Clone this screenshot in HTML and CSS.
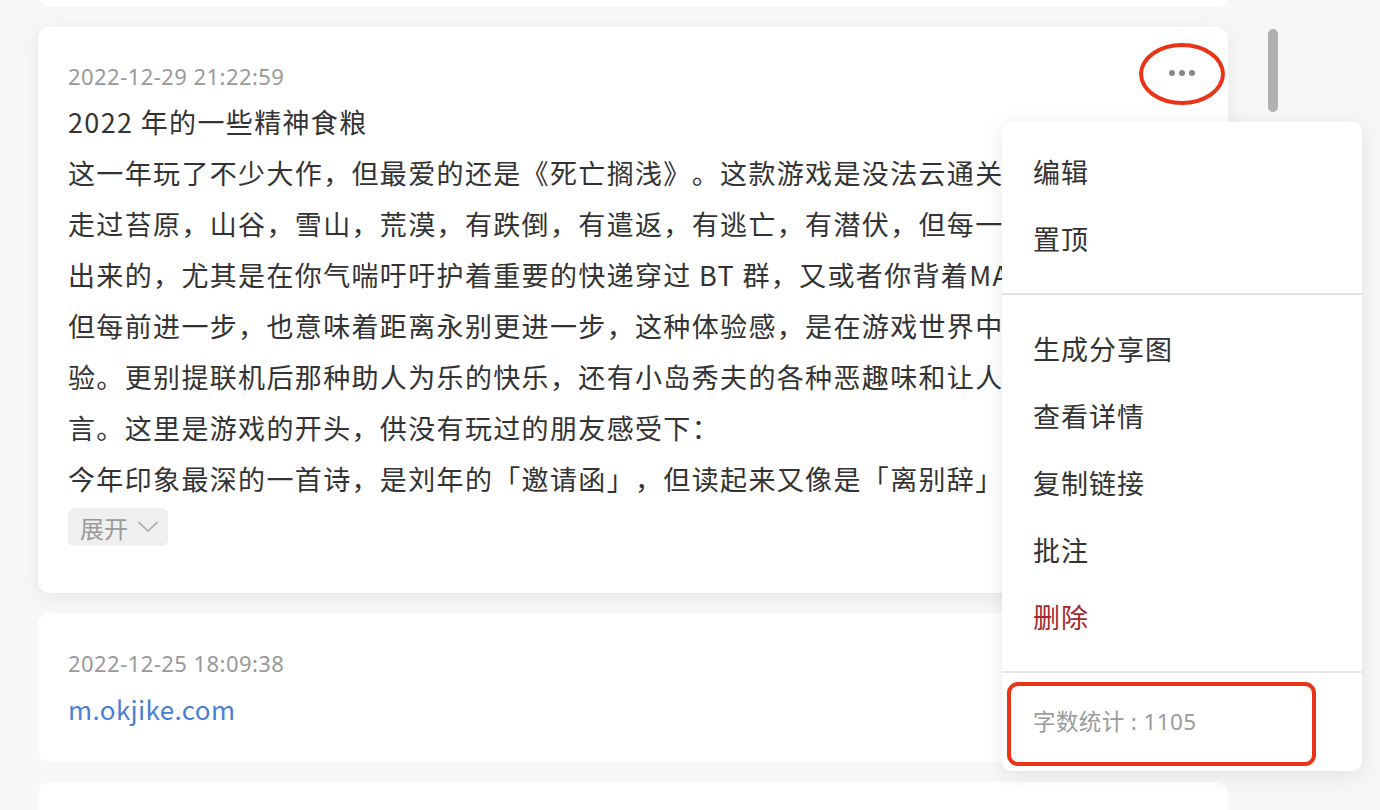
FILE: index.html
```html
<!DOCTYPE html>
<html lang="zh-CN">
<head>
<meta charset="utf-8">
<title>笔记</title>
<link rel="stylesheet" href="styles.css">
</head>
<body>
<div class="page">
  <div class="feed">
    <div class="card card-prev"></div>

    <div class="card card-active">
      <div class="card-head">
        <div class="time">2022-12-29 21:22:59</div>
        <button class="more" aria-label="更多"><span></span><span></span><span></span></button>
      </div>
      <div class="title">2022 年的一些精神食粮</div>
      <div class="body">
        <div class="line">这一年玩了不少大作，但最爱的还是《死亡搁浅》。这款游戏是没法云通关</div>
        <div class="line">走过苔原，山谷，雪山，荒漠，有跌倒，有遣返，有逃亡，有潜伏，但每一</div>
        <div class="line">出来的，尤其是在你气喘吁吁护着重要的快递穿过 BT 群，又或者你背着MAX</div>
        <div class="line">但每前进一步，也意味着距离永别更进一步，这种体验感，是在游戏世界中很</div>
        <div class="line">验。更别提联机后那种助人为乐的快乐，还有小岛秀夫的各种恶趣味和让人</div>
        <div class="line">言。这里是游戏的开头，供没有玩过的朋友感受下：</div>
        <div class="line">今年印象最深的一首诗，是刘年的「邀请函」，但读起来又像是「离别辞」</div>
      </div>
      <button class="expand">展开<svg width="22" height="12" viewBox="0 0 22 12"><path d="M2 1.5 L11 10 L20 1.5" fill="none" stroke="#a6a6a6" stroke-width="1.7" stroke-linecap="round" stroke-linejoin="round"/></svg></button>
    </div>

    <div class="card card-link">
      <div class="time">2022-12-25 18:09:38</div>
      <a class="link" href="#">m.okjike.com</a>
    </div>

    <div class="card card-next"></div>
  </div>

  <div class="scrollbar"></div>

  <div class="menu">
    <div class="menu-group first">
      <div class="menu-item">编辑</div>
      <div class="menu-item">置顶</div>
    </div>
    <div class="menu-group">
      <div class="menu-item">生成分享图</div>
      <div class="menu-item">查看详情</div>
      <div class="menu-item">复制链接</div>
      <div class="menu-item">批注</div>
      <div class="menu-item danger">删除</div>
    </div>
    <div class="menu-foot">字数统计 : 1105</div>
  </div>

  <div class="mark mark-ellipse"></div>
  <div class="mark mark-rect"></div>
</div>
</body>
</html>
```

FILE: styles.css
```css
* { box-sizing: border-box; }
html, body {
  margin: 0;
  padding: 0;
  background: #f7f7f7;
  height: 810px;
  overflow: hidden;
}
body {
  font-family: "Noto Sans CJK SC", "Noto Sans", sans-serif;
  color: #333333;
  text-spacing-trim: space-all;
}
.page {
  position: relative;
  width: 1380px;
  height: 810px;
  overflow: hidden;
}
.feed {
  display: flex;
  flex-direction: column;
  gap: 20px;
  width: 1190px;
  margin-left: 38px;
  margin-top: -133px;
}
.card {
  background: #ffffff;
  border-radius: 12px;
}
.card-prev { height: 140px; }
.card-next { height: 120px; }
.card-active {
  padding: 34px 30px 47px 30px;
  box-shadow: 0 4px 18px rgba(0, 0, 0, 0.07);
}
.card-head {
  display: flex;
  align-items: center;
  justify-content: space-between;
  height: 30px;
}
.time {
  font-family: "Noto Sans", "Noto Sans CJK SC", sans-serif;
  font-size: 22px;
  line-height: 30px;
  color: #999999;
  letter-spacing: 0.45px;
}
.more {
  display: flex;
  gap: 4px;
  border: 0;
  background: none;
  padding: 0;
  margin-right: 3px;
  margin-top: -6px;
}
.more span {
  width: 6px;
  height: 6px;
  border-radius: 50%;
  background: #888888;
}
.title, .line {
  font-size: 27px;
  letter-spacing: 1.35px;
  line-height: 51px;
}
.title { margin-top: 5px; }
.line {
  white-space: nowrap;
  overflow: hidden;
}
.expand {
  display: inline-flex;
  align-items: center;
  gap: 9px;
  margin-top: 4px;
  height: 38px;
  padding: 0 9px 0 12px;
  border: 0;
  border-radius: 6px;
  background: #efefef;
  color: #9a9a9a;
  font-family: inherit;
  font-size: 24px;
}
.card-link {
  padding: 35px 30px 33px 30px;
}
.link {
  display: block;
  margin-top: 11px;
  font-size: 26px;
  line-height: 40px;
  color: #4a7fd4;
  text-decoration: none;
  letter-spacing: 0.4px;
}
.scrollbar {
  position: absolute;
  left: 1268px;
  top: 29px;
  width: 10px;
  height: 83px;
  border-radius: 5px;
  background: #b1b1b1;
}
.menu {
  position: absolute;
  left: 1002px;
  top: 122px;
  width: 360px;
  background: #ffffff;
  border-radius: 9px;
  box-shadow: 0 4px 22px rgba(0, 0, 0, 0.09);
}
.menu-group {
  padding: 20px 0 21px;
  border-bottom: 2px solid #e4e4e4;
}
.menu-group.first { padding-top: 16px; }
.menu-item {
  height: 67px;
  line-height: 67px;
  padding-left: 31px;
  font-size: 27px;
  letter-spacing: 1px;
  color: #333333;
}
.menu-item.danger { color: #a3292b; }
.menu-foot {
  height: 98px;
  line-height: 98px;
  padding-left: 31px;
  font-family: "Noto Sans", "Noto Sans CJK SC", sans-serif;
  font-size: 22.5px;
  letter-spacing: 0.4px;
  color: #9b9b9b;
}
.mark {
  position: absolute;
  border: 4px solid #ea3317;
}
.mark-ellipse {
  left: 1139px;
  top: 43px;
  width: 86px;
  height: 62px;
  border-radius: 50%;
}
.mark-rect {
  left: 1007px;
  top: 682px;
  width: 309px;
  height: 84px;
  border-radius: 11px;
}
```
